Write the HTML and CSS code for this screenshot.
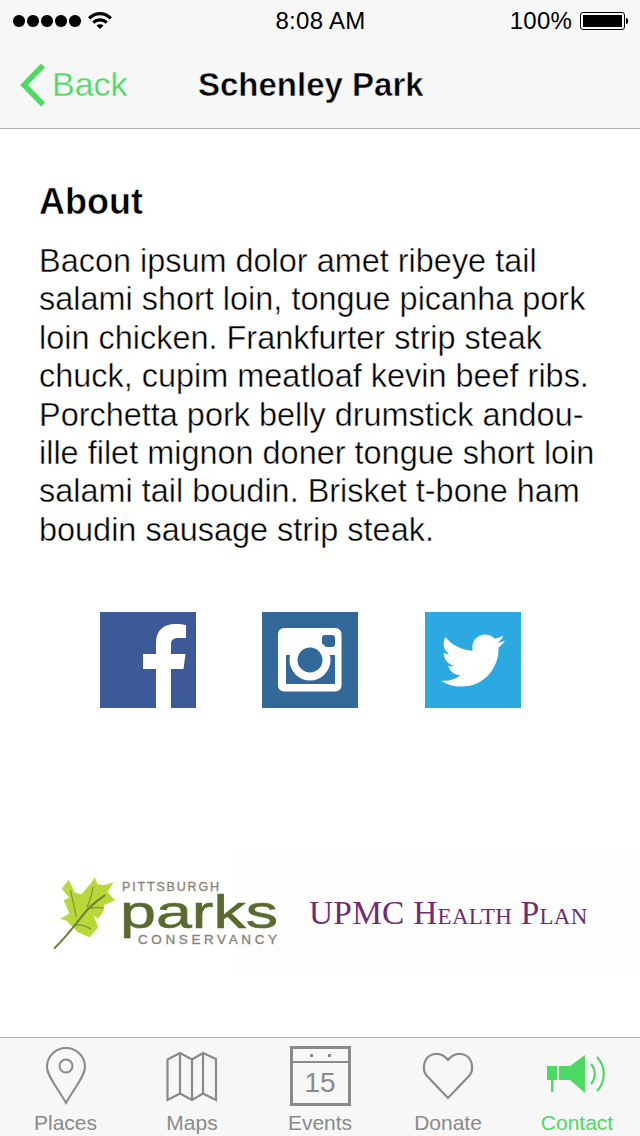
FILE: index.html
```html
<!DOCTYPE html>
<html lang="en">
<head>
<meta charset="utf-8">
<title>Schenley Park</title>
<link rel="stylesheet" href="styles.css">
</head>
<body>
<div class="page">
  <header class="topbar">
    <div class="status">
      <div class="status-left">
        <div class="dots"><i></i><i></i><i></i><i></i><i></i></div>
        <svg class="wifi" width="24" height="18" viewBox="0 0 24 18"><path d="M0 6.200C7 -.8 17 -.8 24 6.200L21.800 8.500C15.800 2.800 8.200 2.800 2.200 8.500Z"/><path d="M4.200 10.500C9 6.200 15 6.200 19.800 10.500L17.600 12.800C14 9.800 10 9.800 6.400 12.800Z"/><path d="M8.400 14.500C10.600 12.800 13.400 12.800 15.600 14.500L12 18Z"/></svg>
      </div>
      <div class="clock">8:08 AM</div>
      <div class="status-right">
        <span class="pct">100%</span>
        <div class="battery"><div class="battery-fill"></div></div>
      </div>
    </div>
    <nav class="navbar">
      <a class="back">
        <svg width="26" height="44" viewBox="0 0 26 44"><path d="M23 2.500L4 22L23 41.500" fill="none" stroke="#4cd964" stroke-width="5.500"/></svg>
        <span>Back</span>
      </a>
      <h1 class="title">Schenley Park</h1>
    </nav>
  </header>

  <main class="content">
    <section class="about">
      <h2>About</h2>
      <p>Bacon ipsum dolor amet ribeye tail<br>salami short loin, tongue picanha pork<br>loin chicken. Frankfurter strip steak<br>chuck, cupim meatloaf kevin beef ribs.<br>Porchetta pork belly drumstick andou-<br>ille filet mignon doner tongue short loin<br>salami tail boudin. Brisket t-bone ham<br>boudin sausage strip steak.</p>
    </section>

    <div class="social">
      <svg class="tile" viewBox="0 0 96 96"><rect width="96" height="96" fill="#3d5a98"/><path fill="#fff" d="M56 96V57H43V42H56V31C56 18 64 12 75 12C80 12 84 12.500 86 13V26H78C73 26 71 28 71 33V42H85.500L83.500 57H71V96Z"/></svg>
      <svg class="tile" viewBox="0 0 96 96"><rect width="96" height="96" fill="#33689b"/><rect x="16" y="16" width="63.500" height="63.500" rx="6" fill="#fff"/><rect x="60" y="23" width="13" height="12" rx="3" fill="#33689b"/><rect x="24" y="43" width="49" height="29" fill="#33689b"/><circle cx="48" cy="48" r="20.500" fill="#fff"/><circle cx="48" cy="48" r="12.500" fill="#33689b"/></svg>
      <svg class="tile" viewBox="0 0 96 96"><rect width="96" height="96" fill="#2ca9e1"/><path transform="translate(16 16.500) scale(2.670)" fill="#fff" d="M23.953 4.570a10 10 0 01-2.825.775 4.958 4.958 0 002.163-2.723c-.951.555-2.005.959-3.127 1.184a4.920 4.920 0 00-8.384 4.482C7.690 8.095 4.067 6.130 1.640 3.162a4.822 4.822 0 00-.666 2.475c0 1.710.870 3.213 2.188 4.096a4.904 4.904 0 01-2.228-.616v.060a4.923 4.923 0 003.946 4.827 4.996 4.996 0 01-2.212.085 4.936 4.936 0 004.604 3.417 9.867 9.867 0 01-6.102 2.105c-.390 0-.779-.023-1.170-.067a13.995 13.995 0 007.557 2.209c9.053 0 13.998-7.496 13.998-13.985 0-.210 0-.420-.015-.630A9.935 9.935 0 0024 4.590z"/></svg>
    </div>

    <div class="sponsors">
      <div class="upmc">UPMC Health Plan</div>
      <svg class="parks" width="236" height="120" viewBox="0 0 236 120">
        <path fill="#b8d83a" stroke="#b8d83a" stroke-width=".6" stroke-linejoin="round" d="M68.700 27.300L74.700 39.700L81.300 41.700L90.700 30.700L94.700 25L97.300 31.700L104.700 32.300L113 29.700L107.300 39L114.700 47.300L104 51.700L103 58.300L98 65.700L93 61.700L98 74L89.700 84L78 79L73 74L66.300 67.300L60.700 65.700L69.700 60.700L64 47.300L69.700 45L62 35.700Z"/>
        <path fill="none" stroke="#7a9440" stroke-width="1.200" d="M70.700 37.300C72 46 75 56 76.300 64M93 34C92 42 90 48 87.300 54M88 55.700C94 54 99 54.500 104 55M74 72.300C80 71 86 73 91.300 76.300"/>
        <path fill="none" stroke="#6b8238" stroke-width="2" stroke-linecap="round" d="M54.700 95C68 82 76 70 88 56C94 50 99 46 104.700 42.300"/>
        <text class="p-small" x="122" y="38" textLength="97">PITTSBURGH</text>
        <text class="p-big" x="120" y="75" textLength="158" lengthAdjust="spacingAndGlyphs">parks</text>
        <text class="p-cons" x="138" y="91" textLength="139">CONSERVANCY</text>
      </svg>
    </div>
  </main>

  <footer class="tabbar">
    <a class="tab first">
      <svg width="42" height="60" viewBox="0 0 42 60"><path fill="none" stroke="#8a8a8a" stroke-width="2" d="M21 57C12 41 2 30 2 21A19 19 0 0 1 40 21C40 30 30 41 21 57Z"/><circle cx="21" cy="20" r="6.500" fill="none" stroke="#8a8a8a" stroke-width="2"/></svg>
      <span>Places</span>
    </a>
    <a class="tab">
      <svg width="52" height="60" viewBox="0 0 52 60"><path fill="none" stroke="#8a8a8a" stroke-width="2.200" d="M1.500 13.500L14 7L26 13.500L37 7L50 13L50 54L37 47.500L26 54L14 47.500L1.500 54ZM14 7V47.500M26 13.500V54M37 7V47.500"/></svg>
      <span>Maps</span>
    </a>
    <a class="tab">
      <div class="cal">
        <div class="cal-head"><i></i><i></i></div>
        <div class="cal-day">15</div>
      </div>
      <span>Events</span>
    </a>
    <a class="tab">
      <svg width="52" height="60" viewBox="0 0 52 60"><path fill="none" stroke="#8a8a8a" stroke-width="2.200" d="M26 52L5 30C-1 23 2 9 13 8C19 7.500 23 10 26 14C29 10 33 7.500 39 8C50 9 53 23 47 30Z"/></svg>
      <span>Donate</span>
    </a>
    <a class="tab active">
      <svg width="62" height="60" viewBox="0 0 62 60"><path fill="#4cd964" d="M1 20H11V34H7.500V46H5V34H1ZM13 20H24L39 9V47L24 34H13Z"/><path fill="none" stroke="#4cd964" stroke-width="2.200" d="M45 18C50 24 50 32 45 38M51 11C60 20 60 36 51 45"/></svg>
      <span>Contact</span>
    </a>
  </footer>
</div>
</body>
</html>
```

FILE: styles.css
```css
* { box-sizing: border-box; }
html, body { margin: 0; padding: 0; background: #fff; }
body { font-family: "Liberation Sans", Arial, sans-serif; color: #000; }
.page { width: 640px; height: 1136px; display: flex; flex-direction: column; overflow: hidden; }

.topbar { height: 129px; flex: none; background: #f7f7f7; border-bottom: 1px solid #b2b2b2; }
.status { height: 40px; display: grid; grid-template-columns: 1fr auto 1fr; align-items: center; padding: 2px 12px 0 13px; font-size: 24px; }
.status-left { display: flex; align-items: center; gap: 7px; }
.dots { display: flex; gap: 2.500px; }
.dots i { width: 11.500px; height: 11.500px; border-radius: 50%; background: #000; display: block; }
.wifi { display: block; margin-top: -2px; }
.clock { text-align: center; letter-spacing: .3px; }
.status-right { display: flex; align-items: center; justify-content: flex-end; gap: 8px; }
.pct { letter-spacing: .2px; }
.battery { position: relative; width: 45px; height: 18px; border: 1px solid #000; border-radius: 3px; padding: 2px; margin-right: 3px; }
.battery::after { content: ""; position: absolute; right: -4px; top: 5px; width: 2px; height: 6px; background: #000; border-radius: 0 2px 2px 0; }
.battery-fill { width: 100%; height: 100%; background: #000; }

.navbar { height: 88px; display: flex; align-items: center; padding-left: 20px; }
.back { display: flex; align-items: center; gap: 6px; color: #4cd964; font-size: 34px; width: 178px; margin-top: 2px; -webkit-text-stroke: .3px #f7f7f7; }
.back span { margin-top: -2px; }
.back svg { display: block; }
.title { margin: 2px 0 0; font-size: 33px; font-weight: 700; -webkit-text-stroke: .5px #f7f7f7; }

.content { flex: 1; display: flex; flex-direction: column; min-height: 0; }
.about { padding: 52px 0 0 39px; }
.about h2 { margin: 0; font-size: 36px; line-height: 42px; font-weight: 700; -webkit-text-stroke: .5px #fff; }
.about p { margin: 19px 0 0; font-size: 32.450px; line-height: 38.400px; white-space: nowrap; -webkit-text-stroke: .4px #fff; }

.social { display: flex; gap: 66.500px; padding: 63px 0 0 99.700px; }
.tile { width: 96px; height: 96px; display: block; flex: none; }

.sponsors { position: relative; margin-top: 145px; height: 120px; padding-left: 236px; }
.parks { position: absolute; left: 0; top: 0; overflow: visible; }
.p-small, .p-cons { font-family: "Liberation Sans", Arial, sans-serif; fill: #8b8075; stroke: #8b8075; stroke-width: .3px; }
.p-small { font-size: 12.500px; }
.p-cons { font-size: 13.500px; }
.p-big { font-family: "Liberation Sans", Arial, sans-serif; font-size: 46px; fill: #5a6a2f; stroke: #5a6a2f; stroke-width: .6px; }
.upmc { height: 120px; background: #fdfdfd; padding: 38px 0 0 73px; font-family: "Liberation Serif", "Times New Roman", serif; font-variant: small-caps; font-size: 33.400px; letter-spacing: .25px; line-height: 44px; color: #6f2c6f; white-space: nowrap; }

.tabbar { height: 99px; flex: none; display: grid; grid-template-columns: repeat(5, 1fr); background: #f7f7f7; border-top: 1px solid #b2b2b2; }
.tab { display: flex; flex-direction: column; align-items: center; color: #8a8a8a; font-size: 21px; padding-top: 8px; }
.tab.first { padding-left: 3px; }
.tab.active { padding-left: 2px; }
.tab svg { display: block; height: 60px; }
.tab span { margin-top: 5px; line-height: 24px; }
.tab.active { color: #4cd964; }
.cal { width: 61px; height: 60px; border: 3px solid #8a8a8a; display: flex; flex-direction: column; }
.cal-head { height: 14px; border-bottom: 2px solid #8a8a8a; display: flex; justify-content: center; align-items: center; gap: 15px; flex: none; }
.cal-head i { width: 3px; height: 3px; background: #8a8a8a; display: block; }
.cal-day { flex: 1; text-align: center; font-size: 28px; line-height: 40px; color: #8a8a8a; }
```
